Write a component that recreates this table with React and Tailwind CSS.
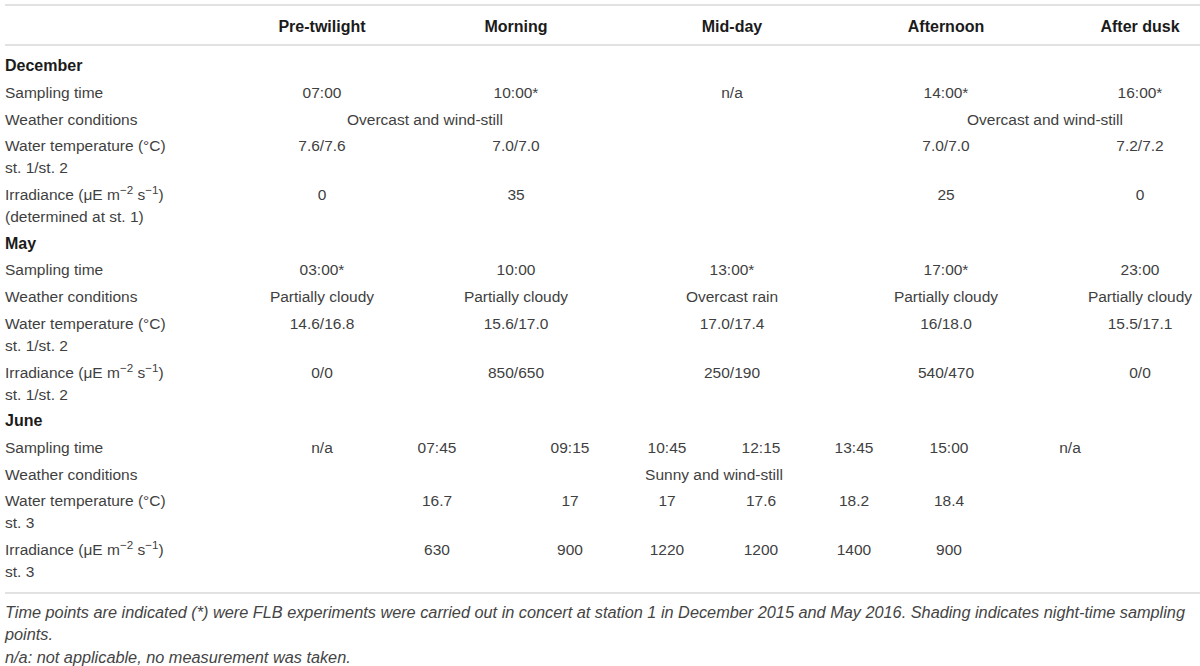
const font = { fontFamily: '"Liberation Sans", Arial, sans-serif' }

// column templates: regular rows, and the split June rows
const REG = 'grid grid-cols-[226px_182px_206px_226px_202px_186px]'
const JUNE = 'grid grid-cols-[285px_64px_166px_100px_94px_94px_92px_98px_144px]'

const Irr = () => (
  <>
    Irradiance (μE m<sup>−2</sup> s<sup>−1</sup>)
  </>
)

function Row({ grid, label, sub, cells }) {
  return (
    <div className={`${grid} items-start py-[2.35px]`}>
      <div className="whitespace-nowrap">
        <div>{label}</div>
        {sub && <div>{sub}</div>}
      </div>
      {cells.map((c, i) =>
        c === null ? (
          <div key={i} />
        ) : (
          <div key={i} className={`text-center whitespace-nowrap ${c.cls || ''}`}>
            {c.t ?? c}
          </div>
        )
      )}
    </div>
  )
}

function Section({ title }) {
  return (
    <div className="py-[2.35px] font-bold text-[16px] text-[#1b1b1b]">{title}</div>
  )
}

export default function App() {
  return (
    <div className="w-[1200px] h-[666px] overflow-hidden bg-white" style={font}>
      <div className="w-[1238px] pl-[5px] pt-[4px]">
        <div className="border-y-2 border-[#e2e2e2] h-[42px] pt-[3px]">
          <div className={`${REG} h-full items-center font-bold text-[16px] text-[#1b1b1b]`}>
            <div />
            <div className="text-center">Pre-twilight</div>
            <div className="text-center">Morning</div>
            <div className="text-center">Mid-day</div>
            <div className="text-center">Afternoon</div>
            <div className="text-center">After dusk</div>
          </div>
        </div>

        <div className="border-b-2 border-[#e2e2e2] pt-[7px] pb-[6.3px] text-[15.5px] leading-[22px] text-[#3f3f3f]">
          <Section title="December" />
          <Row grid={REG} label="Sampling time" cells={['07:00', '10:00*', 'n/a', '14:00*', '16:00*']} />
          <div className={`${REG} py-[2.35px]`}>
            <div>Weather conditions</div>
            <div className="col-span-2 text-center">Overcast and wind-still</div>
            <div />
            <div className="col-span-2 text-center pl-[12px]">Overcast and wind-still</div>
          </div>
          <Row grid={REG} label="Water temperature (°C)" sub="st. 1/st. 2" cells={['7.6/7.6', '7.0/7.0', null, '7.0/7.0', '7.2/7.2']} />
          <Row grid={REG} label={<Irr />} sub="(determined at st. 1)" cells={['0', '35', null, '25', '0']} />

          <Section title="May" />
          <Row grid={REG} label="Sampling time" cells={['03:00*', '10:00', '13:00*', '17:00*', '23:00']} />
          <Row
            grid={REG}
            label="Weather conditions"
            cells={['Partially cloudy', 'Partially cloudy', 'Overcast rain', 'Partially cloudy', 'Partially cloudy']}
          />
          <Row grid={REG} label="Water temperature (°C)" sub="st. 1/st. 2" cells={['14.6/16.8', '15.6/17.0', '17.0/17.4', '16/18.0', '15.5/17.1']} />
          <Row grid={REG} label={<Irr />} sub="st. 1/st. 2" cells={['0/0', '850/650', '250/190', '540/470', '0/0']} />

          <Section title="June" />
          <Row grid={JUNE} label="Sampling time" cells={['n/a', '07:45', '09:15', '10:45', '12:15', '13:45', '15:00', 'n/a']} />
          <div className={`${JUNE} py-[2.35px]`}>
            <div>Weather conditions</div>
            <div className="col-start-5 col-span-2 text-center whitespace-nowrap">Sunny and wind-still</div>
          </div>
          <Row grid={JUNE} label="Water temperature (°C)" sub="st. 3" cells={[null, '16.7', '17', '17', '17.6', '18.2', '18.4', null]} />
          <Row grid={JUNE} label={<Irr />} sub="st. 3" cells={[null, '630', '900', '1220', '1200', '1400', '900', null]} />
        </div>
      </div>

      <div className="w-[1197px] pl-[5px] mt-[7px] italic text-[16.3px] leading-[22.5px] text-[#444]">
        <p>
          Time points are indicated (*) were FLB experiments were carried out in concert at station 1 in December 2015 and May
          2016. Shading indicates night-time sampling points.
        </p>
        <p>n/a: not applicable, no measurement was taken.</p>
      </div>
    </div>
  )
}
